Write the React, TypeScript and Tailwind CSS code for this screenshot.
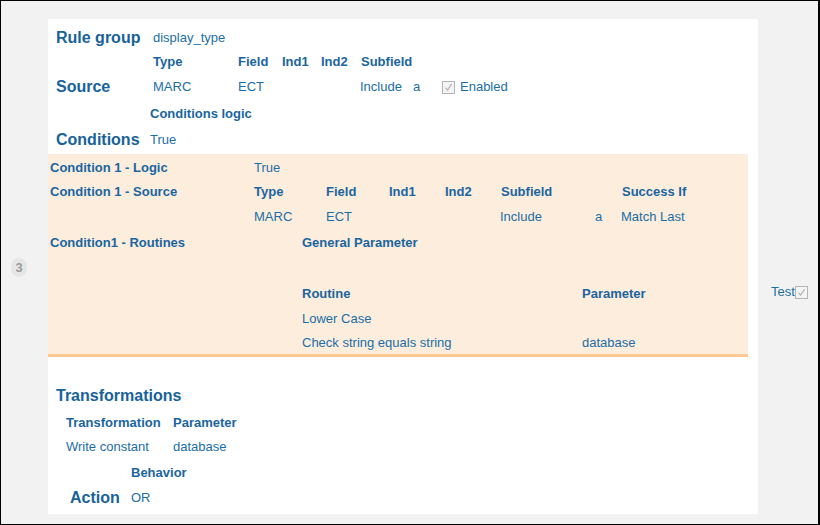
import React from "react";

const font = { fontFamily: '"Liberation Sans", Arial, sans-serif' };

function Check() {
  return (
    <span className="inline-flex h-[13px] w-[13px] items-center justify-center border border-[#b4b4b4] bg-[#f4f4f4]">
      <svg width="11" height="11" viewBox="0 0 11 11">
        <path d="M2.5 5.8 L4.6 8.2 L8.6 2.2" fill="none" stroke="#b9b9b9" strokeWidth="1.4" />
      </svg>
    </span>
  );
}

const H = "text-[16px] font-bold text-[#17629a]";
const B = "text-[13px] font-bold text-[#1a65a0]";
const V = "text-[13px] text-[#1b6ea6]";

export default function App() {
  return (
    <div
      className="box-border flex h-[525px] w-[820px] border-t border-b border-l border-r-2 border-black bg-[#f2f2f2]"
      style={font}
    >
      {/* left gutter with row number */}
      <div className="w-[47px] shrink-0 pt-[257px] pl-[10px]">
        <span className="flex h-[19px] w-[16px] items-center justify-center rounded-full bg-[#e6e6e6] text-[13px] font-bold text-[#9a9a9a]">
          3
        </span>
      </div>

      {/* main panel */}
      <div className="mt-[18px] mb-[10px] w-[710px] shrink-0 bg-white">
        <div className="pt-[7px] pl-[8px]">
          <div className="flex h-[24px] items-center">
            <span className={`${H} w-[97px]`}>Rule group</span>
            <span className={V}>display_type</span>
          </div>
          <div className="flex h-[24px] items-center">
            <span className="w-[97px]" />
            <span className={`${B} w-[85px]`}>Type</span>
            <span className={`${B} w-[44px]`}>Field</span>
            <span className={`${B} w-[39px]`}>Ind1</span>
            <span className={`${B} w-[40px]`}>Ind2</span>
            <span className={B}>Subfield</span>
          </div>
          <div className="flex h-[26px] items-center">
            <span className={`${H} w-[97px]`}>Source</span>
            <span className={`${V} w-[85px]`}>MARC</span>
            <span className={`${V} w-[122px]`}>ECT</span>
            <span className={`${V} w-[53px]`}>Include</span>
            <span className={`${V} w-[29px]`}>a</span>
            <Check />
            <span className={`${V} ml-[5px]`}>Enabled</span>
          </div>
          <div className="flex h-[28px] items-center">
            <span className="w-[94px]" />
            <span className={B}>Conditions logic</span>
          </div>
          <div className="flex h-[24px] items-center">
            <span className={`${H} w-[94px]`}>Conditions</span>
            <span className={V}>True</span>
          </div>
        </div>

        {/* condition block */}
        <div className="mt-[2px] w-[700px] border-b-[3px] border-[#fec993] bg-[#fdeddd] pt-[2px] pl-[2px]">
          <div className="flex h-[24px] items-center">
            <span className={`${B} w-[204px]`}>Condition 1 - Logic</span>
            <span className={V}>True</span>
          </div>
          <div className="flex h-[24px] items-center">
            <span className={`${B} w-[204px]`}>Condition 1 - Source</span>
            <span className={`${B} w-[72px]`}>Type</span>
            <span className={`${B} w-[63px]`}>Field</span>
            <span className={`${B} w-[56px]`}>Ind1</span>
            <span className={`${B} w-[56px]`}>Ind2</span>
            <span className={`${B} w-[121px]`}>Subfield</span>
            <span className={B}>Success If</span>
          </div>
          <div className="flex h-[26px] items-center">
            <span className="w-[204px]" />
            <span className={`${V} w-[72px]`}>MARC</span>
            <span className={`${V} w-[174px]`}>ECT</span>
            <span className={`${V} w-[95px]`}>Include</span>
            <span className={`${V} w-[26px]`}>a</span>
            <span className={V}>Match Last</span>
          </div>
          <div className="flex h-[26px] items-center">
            <span className={`${B} w-[252px]`}>Condition1 - Routines</span>
            <span className={B}>General Parameter</span>
          </div>
          <div className="h-[25px]" />
          <div className="flex h-[26px] items-center">
            <span className="w-[252px]" />
            <span className={`${B} w-[280px]`}>Routine</span>
            <span className={B}>Parameter</span>
          </div>
          <div className="flex h-[24px] items-center">
            <span className="w-[252px]" />
            <span className={V}>Lower Case</span>
          </div>
          <div className="flex h-[23px] items-center">
            <span className="w-[252px]" />
            <span className={`${V} w-[280px]`}>Check string equals string</span>
            <span className={V}>database</span>
          </div>
        </div>

        {/* transformations */}
        <div className="pt-[27px] pl-[8px]">
          <div className="flex h-[24px] items-center">
            <span className={H}>Transformations</span>
          </div>
          <div className="mt-[3px] flex h-[24px] items-center pl-[10px]">
            <span className={`${B} w-[107px]`}>Transformation</span>
            <span className={B}>Parameter</span>
          </div>
          <div className="flex h-[24px] items-center pl-[10px]">
            <span className={`${V} w-[107px]`}>Write constant</span>
            <span className={V}>database</span>
          </div>
          <div className="mt-[2px] flex h-[24px] items-center pl-[75px]">
            <span className={B}>Behavior</span>
          </div>
          <div className="mt-[1px] flex h-[24px] items-center pl-[14px]">
            <span className={`${H} w-[61px]`}>Action</span>
            <span className={V}>OR</span>
          </div>
        </div>
      </div>

      {/* right gutter */}
      <div className="flex-1 pt-[283px] pl-[13px]">
        <div className="flex h-[16px] items-center">
          <span className={V}>Test</span>
          <Check />
        </div>
      </div>
    </div>
  );
}
